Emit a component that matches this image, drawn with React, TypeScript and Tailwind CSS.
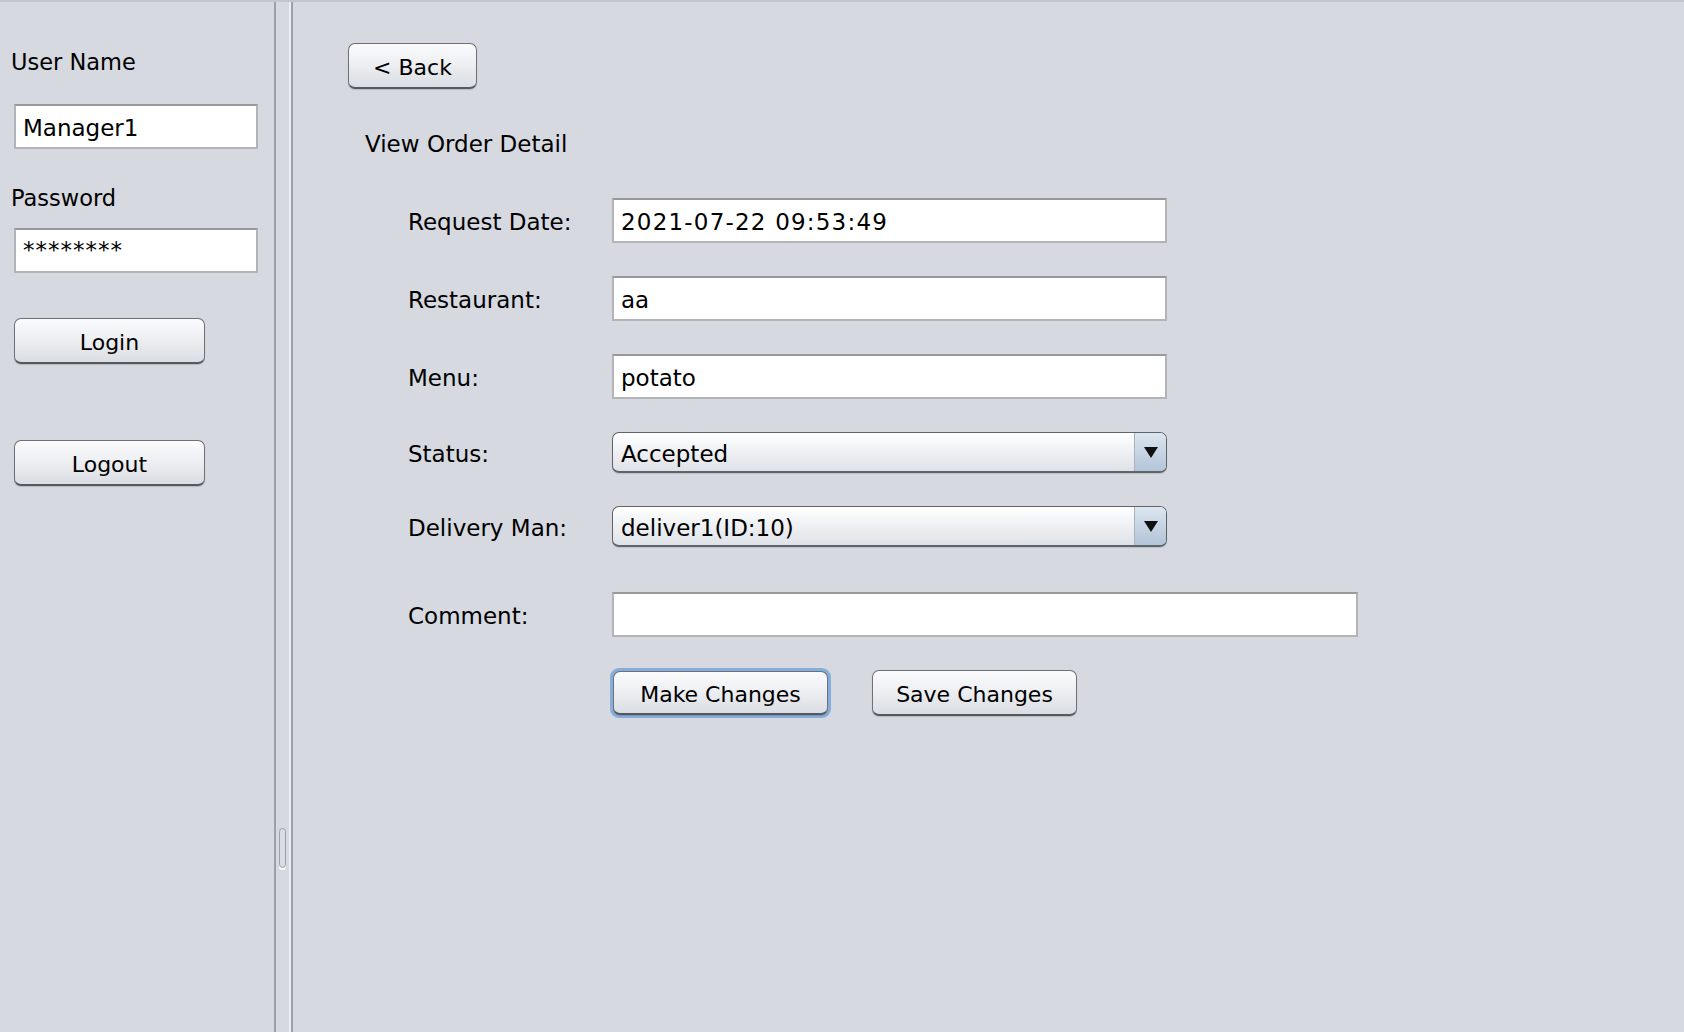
import { ReactNode } from 'react';

const AquaButton = ({ children, className = '', focused = false }: { children: ReactNode; className?: string; focused?: boolean }) => (
    <div className={`rounded-[9px] ${focused ? 'p-[3px] bg-[#86aedd]' : 'p-0'} ${className}`}>
        <div className="flex h-full w-full items-center justify-center rounded-[7px] border border-[#6d7076] border-b-[2px] border-b-[#55585d] bg-gradient-to-b from-[#fbfbfc] via-[#eceef1] to-[#dadde2] pt-[4px] text-[22px] leading-none text-black shadow-[0_1px_1px_rgba(0,0,0,0.15)]">
            {children}
        </div>
    </div>
);

const TextField = ({ value, className = '' }: { value: string; className?: string }) => (
    <div className={`flex items-center border-2 border-[#b3b4b7] border-t-[#98999c] bg-white px-[7px] pt-[4px] text-[23px] leading-none text-black ${className}`}>
        {value}
    </div>
);

const Combo = ({ value }: { value: string }) => (
    <div className="flex h-[41px] w-[555px] overflow-hidden rounded-[7px] border border-[#5f646b] border-b-[2px] bg-gradient-to-b from-[#ffffff] via-[#eef0f3] to-[#dfe2e7] shadow-[0_1px_1px_rgba(0,0,0,0.12)]">
        <div className="flex flex-1 items-center pl-[8px] pt-[4px] text-[23px] leading-none text-black">{value}</div>
        <div className="flex w-[32px] items-center justify-center border-l border-[#a9b2bd] bg-gradient-to-b from-[#dde6f0] via-[#c7d4e3] to-[#b3c5d9]">
            <svg width="14" height="11" viewBox="0 0 14 11">
                <path d="M0 0 L14 0 L7 11 Z" fill="#111" />
            </svg>
        </div>
    </div>
);

const FormRow = ({ label, children, className = '' }: { label: string; children: ReactNode; className?: string }) => (
    <div className={`flex items-center ${className}`}>
        <div className="w-[204px] pt-[4px] text-[23px] leading-none text-black">{label}</div>
        {children}
    </div>
);

export default function App() {
    return (
        <div className="flex h-[1032px] w-[1684px] overflow-hidden border-t-2 border-[#c2c5ca] bg-[#d6d9df] font-['DejaVu_Sans',sans-serif]">
            <aside className="flex w-[274px] shrink-0 flex-col pl-[11px]">
                <div className="mt-[47px] text-[22.5px] leading-[26px] text-black">User Name</div>
                <TextField value="Manager1" className="ml-[3px] mt-[29px] h-[45px] w-[244px]" />
                <div className="mt-[36px] text-[22.5px] leading-[26px] text-black">Password</div>
                <TextField value="********" className="ml-[3px] mt-[17px] h-[45px] w-[244px] items-start pt-[9px] text-[22px] tracking-[1px]" />
                <AquaButton className="ml-[3px] mt-[45px] h-[46px] w-[191px]">Login</AquaButton>
                <AquaButton className="ml-[3px] mt-[76px] h-[46px] w-[191px]">Logout</AquaButton>
            </aside>

            <div className="flex w-[19px] shrink-0 items-center">
                <div className="h-full w-[2px] bg-[#9b9fa8]" />
                <div className="flex h-full w-[13px] flex-col items-center pt-[826px]">
                    <div className="h-[40px] w-[7px] rounded-full border border-[#9aa0a8] bg-[#d9dce1] shadow-[0_2px_0_#ffffff]" />
                </div>
                <div className="h-full w-[2px] bg-[#eef0f3]" />
                <div className="h-full w-[2px] bg-[#9b9fa8]" />
            </div>

            <main className="flex flex-1 flex-col pl-[55px]">
                <AquaButton className="mt-[41px] h-[46px] w-[129px]">&lt; Back</AquaButton>
                <div className="ml-[17px] mt-[42px] text-[23px] leading-[26px] text-black">View Order Detail</div>

                <div className="ml-[60px] mt-[41px] flex flex-col">
                    <FormRow label="Request Date:">
                        <TextField value="2021-07-22 09:53:49" className="h-[45px] w-[555px] tracking-[1.2px]" />
                    </FormRow>
                    <FormRow label="Restaurant:" className="mt-[33px]">
                        <TextField value="aa" className="h-[45px] w-[555px]" />
                    </FormRow>
                    <FormRow label="Menu:" className="mt-[33px]">
                        <TextField value="potato" className="h-[45px] w-[555px]" />
                    </FormRow>
                    <FormRow label="Status:" className="mt-[33px]">
                        <Combo value="Accepted" />
                    </FormRow>
                    <FormRow label="Delivery Man:" className="mt-[33px]">
                        <Combo value="deliver1(ID:10)" />
                    </FormRow>
                    <FormRow label="Comment:" className="mt-[45px]">
                        <TextField value="" className="h-[45px] w-[746px]" />
                    </FormRow>
                    <div className="mt-[31px] flex items-center pl-[202px]">
                        <AquaButton focused className="h-[50px] w-[221px]">Make Changes</AquaButton>
                        <AquaButton className="ml-[41px] h-[46px] w-[205px]">Save Changes</AquaButton>
                    </div>
                </div>
            </main>
        </div>
    );
}
